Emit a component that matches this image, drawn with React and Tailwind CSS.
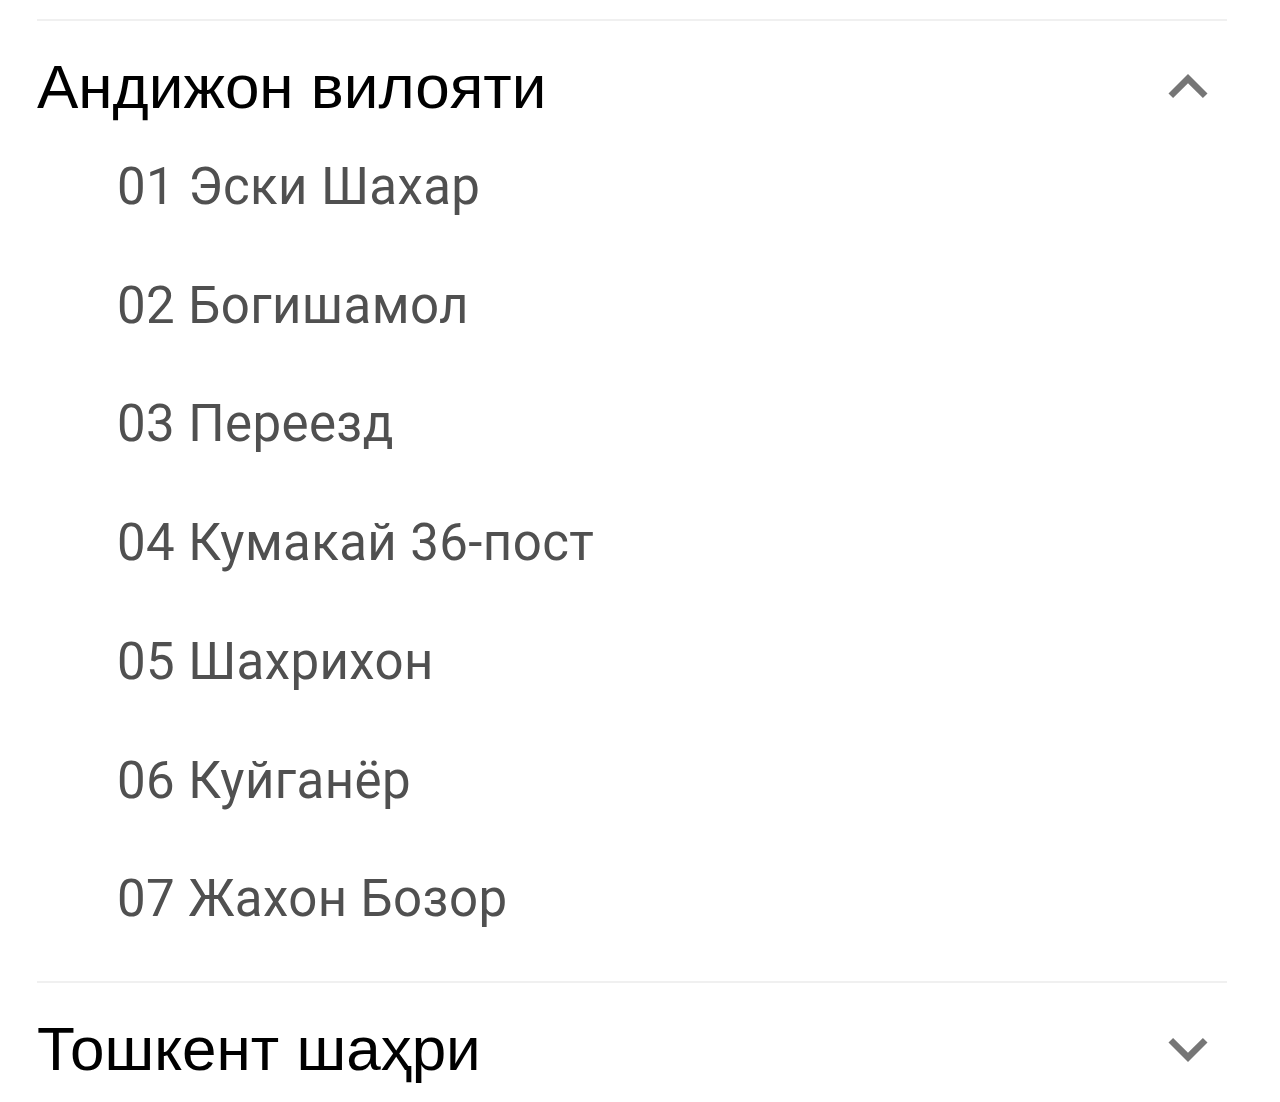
import { useState } from "react";

const regions = [
  {
    name: "Андижон вилояти",
    items: [
      "01 Эски Шахар",
      "02 Богишамол",
      "03 Переезд",
      "04 Кумакай 36-пост",
      "05 Шахрихон",
      "06 Куйганёр",
      "07 Жахон Бозор",
    ],
  },
  { name: "Тошкент шаҳри", items: [] },
];

const Chevron = ({ open }) => (
  <svg viewBox="0 0 24 24" className="h-[78px] w-[78px] shrink-0 fill-[#767676]">
    {open ? (
      <path d="M12 8l-6 6 1.41 1.41L12 10.83l4.59 4.58L18 14z" />
    ) : (
      <path d="M16.59 8.59L12 13.17 7.41 8.59 6 10l6 6 6-6z" />
    )}
  </svg>
);

function Region({ region, open, onToggle }) {
  return (
    <div className="border-t-2 border-[#f0f0f0]">
      <button
        onClick={onToggle}
        className="mt-[27px] flex w-full items-center justify-between text-left"
      >
        <span className="font-['Liberation_Sans',Arial,sans-serif] text-[62px] leading-[70px] text-black">
          {region.name}
        </span>
        <Chevron open={open} />
      </button>
      {open && (
        <ul className="mt-[2px] mb-[22px] pl-[80px]">
          {region.items.map((item) => (
            <li
              key={item}
              className="font-['Roboto',sans-serif] text-[51px] leading-[118.7px] tracking-[0.4px] text-[#505050]"
            >
              {item}
            </li>
          ))}
        </ul>
      )}
    </div>
  );
}

export default function App() {
  const [openIdx, setOpenIdx] = useState(0);

  return (
    <div className="min-h-[1102px] bg-white pt-[19px] pl-[37px] pr-[53px]">
      {regions.map((region, i) => (
        <Region
          key={region.name}
          region={region}
          open={openIdx === i}
          onToggle={() => setOpenIdx(openIdx === i ? -1 : i)}
        />
      ))}
    </div>
  );
}
